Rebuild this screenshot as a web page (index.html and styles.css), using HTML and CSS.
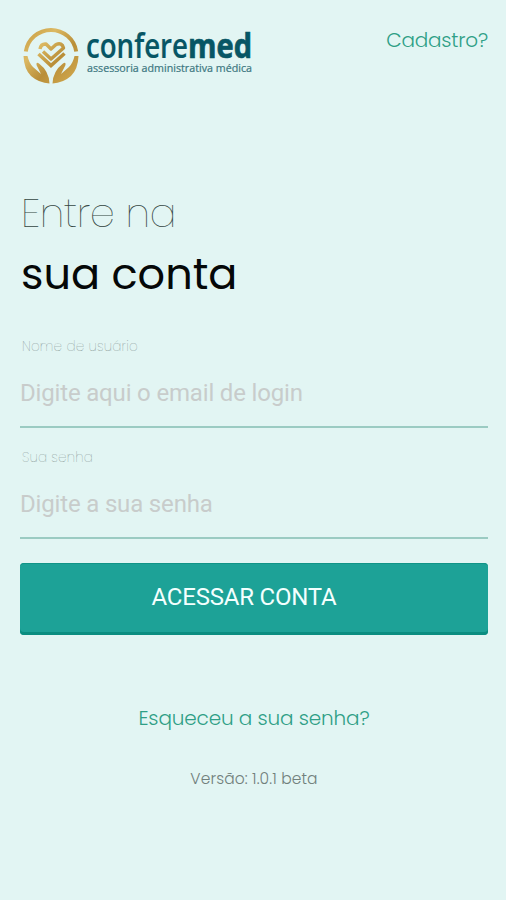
FILE: index.html
```html
<!DOCTYPE html>
<html lang="pt-BR">
<head>
<meta charset="utf-8">
<meta name="viewport" content="width=device-width, initial-scale=1">
<title>Conferemed</title>
<link rel="stylesheet" href="styles.css">
</head>
<body>
<main class="screen">
  <header class="header">
    <svg class="logo" width="240" height="72" viewBox="0 -10 240 72" role="img" aria-label="conferemed">
      <defs>
        <linearGradient id="gold" gradientUnits="userSpaceOnUse" x1="4" y1="4" x2="58" y2="58">
          <stop offset="0" stop-color="#c69a3f"/>
          <stop offset=".3" stop-color="#dcb963"/>
          <stop offset=".6" stop-color="#b98e38"/>
          <stop offset="1" stop-color="#d4ac50"/>
        </linearGradient>
      </defs>
      <g fill="none" stroke="url(#gold)" stroke-width="4">
        <path d="M5.800 26.500A25.500 25.500 0 0 1 56.200 26.500"/>
        <path d="M20 24Q21 18.500 26 19L31 24L36 19.500Q42 17 43.500 23L31 34L23 26.500" stroke-width="3.400" stroke-linejoin="round"/>
        <path d="M18.500 29L31 40.500L44.500 28.500" stroke-width="3.600"/>
      </g>
      <g fill="url(#gold)">
        <path d="M3.500 31H7.500Q9 38 13 42L21 49L16.500 40Q16 36.500 19 38.500Q29 46 29.500 58.500Q19 58 11 51Q4 44 3.500 31Z"/>
        <path d="M58.500 31H54.500Q53 38 49 42L41 49L45.500 40Q46 36.500 43 38.500Q33 46 32.500 58.500Q43 58 51 51Q58 44 58.500 31Z"/>
      </g>
      <text class="logo-name" x="66" y="33" textLength="102" lengthAdjust="spacingAndGlyphs">confere</text>
      <text class="logo-name logo-name-bold" x="168" y="33" textLength="64" lengthAdjust="spacingAndGlyphs">med</text>
      <text class="logo-tagline" x="67" y="47" textLength="165" lengthAdjust="spacingAndGlyphs">assessoria administrativa médica</text>
    </svg>
    <a class="signup">Cadastro?</a>
  </header>
  <h1 class="title"><span class="title-thin">Entre na</span><span class="title-main">sua conta</span></h1>
  <form class="form">
    <div class="field">
      <label class="label" for="user">Nome de usuário</label>
      <input class="input" id="user" type="text" placeholder="Digite aqui o email de login">
    </div>
    <div class="field">
      <label class="label" for="pass">Sua senha</label>
      <input class="input" id="pass" type="password" placeholder="Digite a sua senha">
    </div>
    <button class="submit" type="button">ACESSAR CONTA</button>
  </form>
  <footer class="footer">
    <a class="forgot">Esqueceu a sua senha?</a>
    <span class="version">Versão: 1.0.1 beta</span>
  </footer>
</main>
</body>
</html>
```
FILE: styles.css
```css
* { box-sizing: border-box; }
body {
  margin: 0;
  background: #e2f5f3;
  font-family: Poppins, Inter, sans-serif;
}
.screen { min-height: 900px; padding: 15px 18px 0 20px; }
.header { display: flex; justify-content: space-between; height: 174px; }
.logo { display: block; flex: none; overflow: visible; }
.logo-name { font: 600 34.500px "Open Sans", sans-serif; fill: #075665; stroke: #075665; stroke-width: .2; }
.logo-name-bold { font-weight: 700; stroke-width: .7; }
.logo-tagline { font: 400 10.500px "Open Sans", sans-serif; fill: #3b7680; stroke: #3b7680; stroke-width: .2; }
.signup { padding-top: 10px; font-size: 20px; font-weight: 300; line-height: 30px; color: #2f9f86; letter-spacing: -.2px; }
.title { margin: 0; display: flex; flex-direction: column; }
.title-thin { padding-left: 1px; font-size: 40px; line-height: 48px; font-weight: 100; color: #334541; letter-spacing: -.5px; }
.title-main { padding-left: 1px; font-size: 43px; line-height: 74px; font-weight: 400; color: #050808; letter-spacing: 0; }
.form { display: flex; flex-direction: column; margin-top: 25px; }
.field { display: flex; flex-direction: column; height: 111px; }
.label { padding: 1px 0 0 2px; font-size: 13.500px; line-height: 20px; font-weight: 200; color: #71837f; letter-spacing: .2px; }
.input {
  height: 71px;
  padding: 3px 0 0;
  border: 0;
  border-bottom: 2px solid #9bcbc2;
  background: transparent;
  font: 400 24px Roboto, sans-serif;
  letter-spacing: -.17px;
}
.input::placeholder { color: #c8cccb; opacity: 1; }
.submit {
  height: 72px;
  margin-top: 5px;
  padding: 0 20px 5px 0;
  border: 0;
  border-radius: 4px;
  background: #1da297;
  box-shadow: inset 0 -3px #0b8d80, inset 0 1px #119487;
  color: #f3fffe;
  font: 400 24px Roboto, sans-serif;
  letter-spacing: -.2px;
}
.footer { display: flex; flex-direction: column; align-items: center; gap: 31px; margin-top: 68px; }
.forgot { font-size: 20px; line-height: 30px; font-weight: 300; color: #2f9f86; letter-spacing: -.15px; }
.version { font-size: 15.500px; line-height: 30px; font-weight: 300; color: #71807c; letter-spacing: .1px; }
```
